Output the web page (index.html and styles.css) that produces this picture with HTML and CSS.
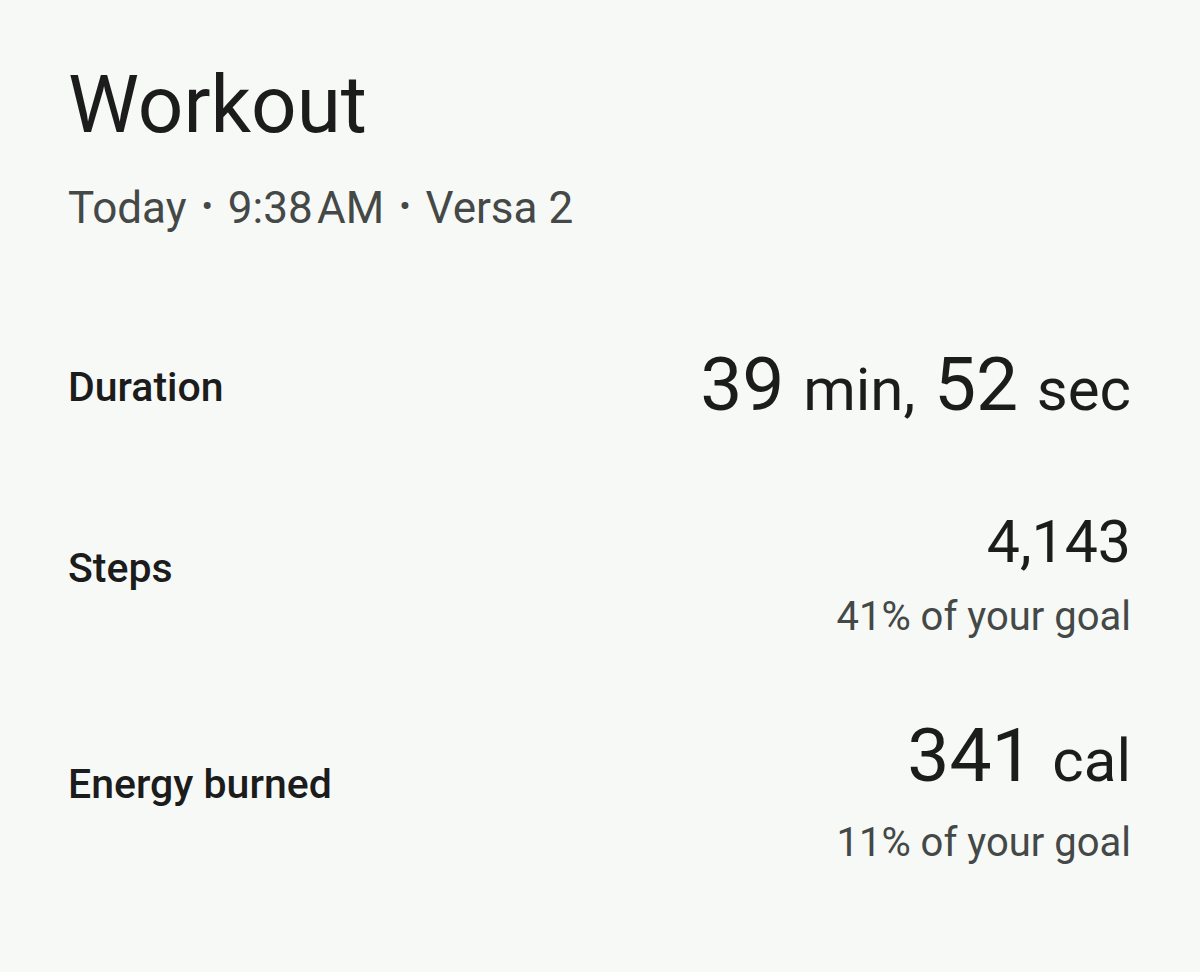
FILE: index.html
```html
<!DOCTYPE html>
<html lang="en">
<head>
  <meta charset="UTF-8" />
  <title>Workout</title>
  <link rel="stylesheet" href="styles.css">
</head>
<body>
  <div class="container">
    <h1 class="title">Workout</h1>
    <p class="meta">Today <span class="dot">•</span> 9:38&#8202;AM <span class="dot">•</span> Versa 2</p>

    <div class="stats">
      <div class="stat-row">
        <div class="stat-label">Duration</div>
        <div class="stat-value">
          <div class="value big">39 <span class="unit">min,</span> 52 <span class="unit">sec</span></div>
        </div>
      </div>

      <div class="stat-row with-goal">
        <div class="stat-label">Steps</div>
        <div class="stat-value">
          <div class="value">4,143</div>
          <div class="goal">41% of your goal</div>
        </div>
      </div>

      <div class="stat-row with-goal">
        <div class="stat-label">Energy burned</div>
        <div class="stat-value">
          <div class="value big">341 <span class="unit">cal</span></div>
          <div class="goal">11% of your goal</div>
        </div>
      </div>
    </div>
  </div>
</body>
</html>
```

FILE: styles.css
```css
* {
  box-sizing: border-box;
}

body {
  margin: 0;
  padding: 0;
  font-family: Roboto, 'Noto Sans', sans-serif;
  background: #f7f9f7;
  color: #1b1c1b;
}

.container {
  padding: 58px 69px 0 68px;
}

.title {
  margin: 0;
  font-size: 80px;
  font-weight: 400;
  line-height: 94px;
}

.meta {
  margin: 26px 0 0;
  font-size: 44px;
  line-height: 56px;
  color: #444846;
}

.meta .dot {
  font-size: 34px;
  vertical-align: 5px;
  margin: 0 4px;
}

.stats {
  margin-top: 106px;
  display: flex;
  flex-direction: column;
  gap: 75px;
}

.stats .with-goal + .with-goal {
  margin-top: -2px;
}

.stat-row {
  display: flex;
  justify-content: space-between;
  align-items: center;
}

.stat-label {
  font-size: 41px;
  font-weight: 500;
}

.with-goal .stat-label {
  margin-bottom: 12px;
}

.stat-value {
  text-align: right;
}

.value {
  font-size: 59px;
  line-height: 70px;
}

.value.big {
  font-size: 75px;
  line-height: 84px;
}

.unit {
  font-size: 60px;
}

.goal {
  margin-top: 17px;
  font-size: 40px;
  line-height: 46px;
  color: #444846;
}
```
